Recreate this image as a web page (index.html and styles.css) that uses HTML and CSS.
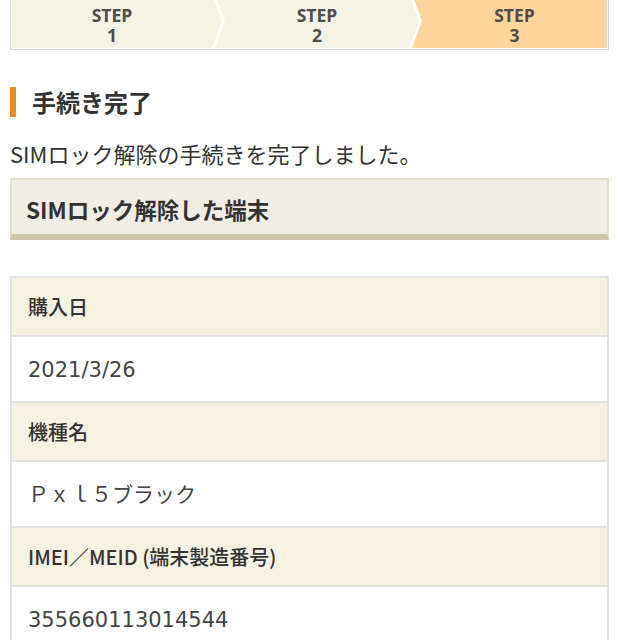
FILE: index.html
```html
<!DOCTYPE HTML>
<html lang="ja">

<head>
  <meta charset="utf-8">
  <meta name="viewport" content="width=device-width, initial-scale=1.0">
  <title>SIMロック解除 手続き完了</title>
  <link rel="stylesheet" href="styles.css">
</head>

<body>
  <div class="page">
    <!-- ステップ表示 -->
    <ol class="steps">
      <li class="step step-first"><span class="step-label">STEP</span><span class="step-num">1</span></li>
      <li class="step step-mid"><span class="step-label">STEP</span><span class="step-num">2</span></li>
      <li class="step step-last step-current"><span class="step-label">STEP</span><span class="step-num">3</span></li>
    </ol>

    <h2 class="section-title">手続き完了</h2>
    <p class="lead">SIMロック解除の手続きを完了しました。</p>

    <div class="box-title">SIMロック解除した端末</div>

    <dl class="info-table">
      <dt class="info-head">購入日</dt>
      <dd class="info-value">2021/3/26</dd>
      <dt class="info-head">機種名</dt>
      <dd class="info-value">Ｐｘｌ５ブラック</dd>
      <dt class="info-head">IMEI／MEID (端末製造番号)</dt>
      <dd class="info-value">355660113014544</dd>
    </dl>
  </div>
</body>

</html>
```

FILE: styles.css
```css
body {
  margin: 0;
  background-color: #fff;
  color: #333;
  font-family: "Noto Sans CJK JP", "Noto Sans", sans-serif;
  overflow: hidden;
}

.page {
  width: 599px;
  margin-left: 10px;
}

/* ステップ */
.steps {
  display: flex;
  margin: -8px 0 0;
  padding: 1px;
  list-style: none;
  border: 1px solid #d4d4d4;
  background-color: #fff;
}

.step {
  box-sizing: border-box;
  display: flex;
  flex-direction: column;
  align-items: center;
  padding: 12px 0 3px;
  font-family: "Open Sans", "Liberation Sans", sans-serif;
  font-weight: bold;
  font-size: 17.5px;
  color: #4d4d4d;
  background-color: #f5f3e5;
}

.step-label,
.step-num {
  display: block;
  height: 19px;
  line-height: 19px;
}

.step-num {
  margin-top: 1px;
}

.step-first {
  flex: 0 0 210px;
  padding-right: 10px;
  clip-path: polygon(0 0, calc(100% - 10px) 0, 100% 50%, calc(100% - 10px) 100%, 0 100%);
}

.step-mid {
  flex: 0 0 204px;
  margin-left: -7px;
  padding-left: 10px;
  padding-right: 10px;
  clip-path: polygon(0 0, calc(100% - 10px) 0, 100% 50%, calc(100% - 10px) 100%, 0 100%, 10px 50%);
}

.step-last {
  flex: 1;
  margin-left: -7px;
  padding-left: 10px;
  clip-path: polygon(0 0, 100% 0, 100% 100%, 0 100%, 10px 50%);
}

.step-current {
  background-color: #fdd59c;
}

/* 見出し */
.section-title {
  margin: 37px 0 0;
  padding-left: 16px;
  border-left: 6px solid #f6891f;
  font-size: 24px;
  line-height: 30px;
  font-weight: bold;
  color: #333;
}

.lead {
  margin: 21px 0 0;
  font-size: 22px;
  line-height: 30px;
}

.box-title {
  margin-top: 10px;
  padding: 4px 14px 0;
  border: 2px solid #e4dfcb;
  border-bottom: 6px solid #cfc7a7;
  background-color: #f0ede5;
  font-size: 22.5px;
  line-height: 50px;
  font-weight: bold;
  color: #333;
}

/* 端末情報 */
.info-table {
  margin: 36px 0 0;
  border: 2px solid #e2e2e2;
  border-bottom: none;
}

.info-head,
.info-value {
  margin: 0;
  padding: 0 16px;
  border-bottom: 2px solid #e2e2e2;
}

.info-head {
  height: 57px;
  line-height: 57px;
  background-color: #f5f1e3;
  font-size: 20px;
  font-weight: 500;
  color: #333;
}

.info-value {
  height: 64px;
  line-height: 66px;
  font-family: "DejaVu Sans", "Noto Sans CJK JP", sans-serif;
  font-size: 21px;
  color: #444;
}
```
